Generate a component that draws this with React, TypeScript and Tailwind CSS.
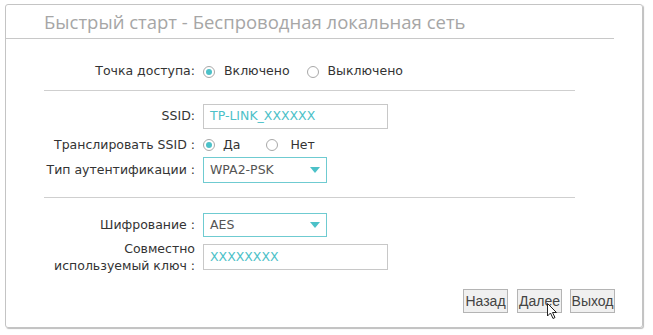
import React from "react";

const label = "w-[197px] shrink-0 pr-[8px] text-right text-[12.5px] text-[#333]";

function Radio({ checked }: { checked?: boolean }) {
  return (
    <span className="flex h-[12px] w-[12px] items-center justify-center rounded-full border border-[#a8a8a8] bg-white">
      {checked && <span className="h-[6px] w-[6px] rounded-full bg-[#4cc1c8]" />}
    </span>
  );
}

function Select({ value }: { value: string }) {
  return (
    <div className="flex h-full w-[124px] items-center justify-between border border-[#6fcbd1] bg-white pl-[6px] pr-[6px] text-[12.5px] text-[#555]">
      <span>{value}</span>
      <svg width="10" height="6" viewBox="0 0 10 6">
        <path d="M0 0 L10 0 L5 6 Z" fill="#4cc1c8" />
      </svg>
    </div>
  );
}

function Input({ value }: { value: string }) {
  return (
    <div className="flex h-full w-[185px] items-center border border-[#c8c8c8] bg-white pl-[6px] text-[12.5px] text-[#4cc1c8]">
      {value}
    </div>
  );
}

export default function App() {
  return (
    <div className="relative h-[335px] w-[653px] bg-white pl-[5px] pt-[4px] font-['DejaVu_Sans',sans-serif]">
      <div className="h-[324px] w-[638px] rounded-[3px] border border-[#c4c4c4] shadow-[1px_1px_1px_#bdbdbd]">
        {/* заголовок */}
        <div className="flex h-[34px] w-[608px] items-center border-b border-[#c8c8c8] pl-[38px] font-['Open_Sans',sans-serif] text-[18.5px] text-[#a6a6a6]">
          Быстрый старт - Беспроводная локальная сеть
        </div>

        <div className="mt-[20px] flex h-[25px] items-center">
          <div className={label}>Точка доступа:</div>
          <div className="flex items-center text-[12.5px] text-[#333]">
            <Radio checked />
            <span className="ml-[9px]">Включено</span>
            <span className="ml-[17px]"><Radio /></span>
            <span className="ml-[9px]">Выключено</span>
          </div>
        </div>

        <div className="ml-[38px] mt-[6px] h-px w-[531px] bg-[#cfcfcf]" />

        <div className="mt-[13px] flex h-[25px] items-center">
          <div className={label}>SSID:</div>
          <Input value="TP-LINK_XXXXXX" />
        </div>

        <div className="mt-[6px] flex h-[20px] items-center">
          <div className={label}>Транслировать SSID :</div>
          <div className="flex items-center text-[12.5px] text-[#333]">
            <Radio checked />
            <span className="ml-[8px]">Да</span>
            <span className="ml-[26px]"><Radio /></span>
            <span className="ml-[12px]">Нет</span>
          </div>
        </div>

        <div className="mt-[2px] flex h-[26px] items-center">
          <div className={label}>Тип аутентификации :</div>
          <Select value="WPA2-PSK" />
        </div>

        <div className="ml-[38px] mt-[14px] h-px w-[531px] bg-[#cfcfcf]" />

        <div className="mt-[15px] flex h-[24px] items-center">
          <div className={label}>Шифрование :</div>
          <Select value="AES" />
        </div>

        <div className="mt-[7px] flex h-[26px] items-center">
          <div className={`${label} leading-[17px]`}>
            Совместно
            <br />
            используемый ключ :
          </div>
          <Input value="XXXXXXXX" />
        </div>

        <div className="mt-[19px] flex h-[24px] justify-end gap-[8px] pr-[27px] font-['Liberation_Sans',sans-serif] text-[14px] text-[#444]">
          <button className="w-[45px] border border-[#b4b4b4] bg-[#f0f0f0]">Назад</button>
          <button className="ml-[1px] w-[45px] border border-[#b4b4b4] bg-[#f0f0f0]">Далее</button>
          <button className="w-[45px] border border-[#b4b4b4] bg-[#f0f0f0]">Выход</button>
        </div>
      </div>

      {/* курсор */}
      <svg className="absolute left-[547px] top-[303px]" width="11" height="17" viewBox="0 0 11 17">
        <path d="M0.5 0.5 L0.5 13 L3.5 10 L6 15.5 L8 14.5 L5.5 9.5 L9.5 9.5 Z" fill="white" stroke="#222" strokeWidth="1" />
      </svg>
    </div>
  );
}
